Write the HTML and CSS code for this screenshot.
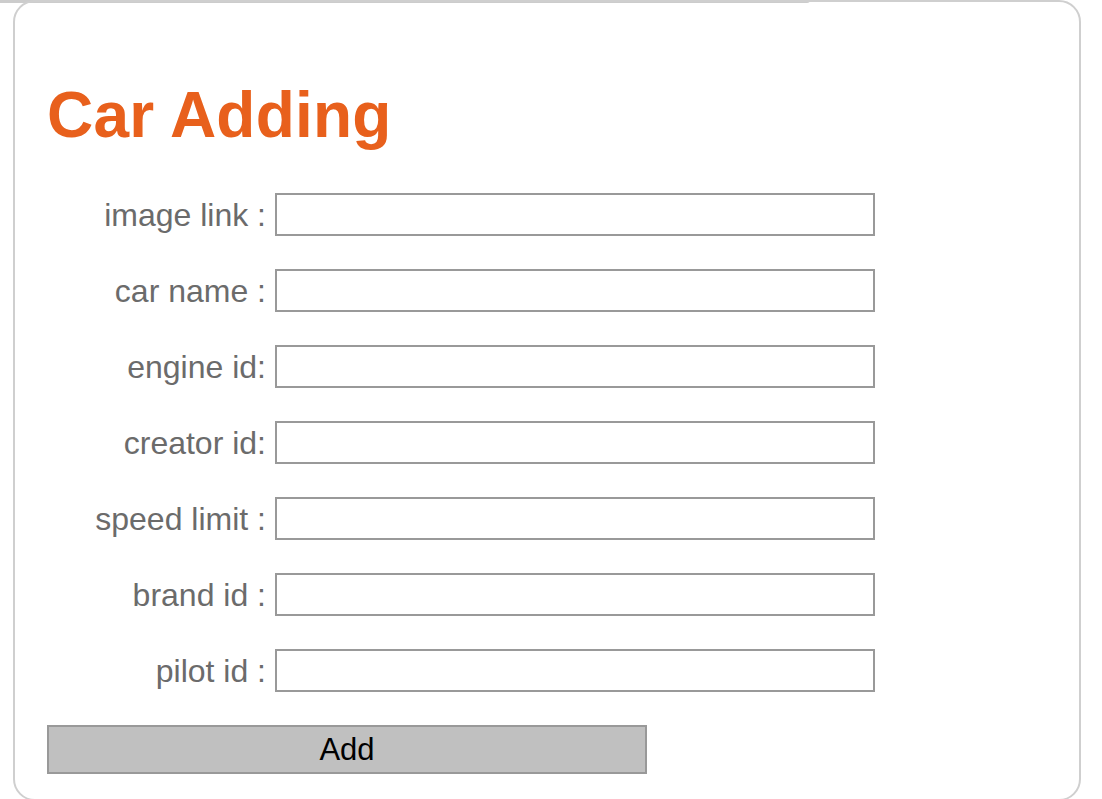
FILE: index.html
```html
<!DOCTYPE html>
<html>
<head>
<meta charset="utf-8">
<link rel="stylesheet" href="styles.css">
</head>
<body>
<div class="prev-card"></div>
<div class="card">
  <h1 class="title">Car Adding</h1>
  <form class="form">
    <label class="label">image link :</label><input class="field" type="text">
    <label class="label">car name :</label><input class="field" type="text">
    <label class="label">engine id:</label><input class="field" type="text">
    <label class="label">creator id:</label><input class="field" type="text">
    <label class="label">speed limit :</label><input class="field" type="text">
    <label class="label">brand id :</label><input class="field" type="text">
    <label class="label">pilot id :</label><input class="field" type="text">
  </form>
  <button class="add-btn" type="button">Add</button>
</div>
</body>
</html>
```

FILE: styles.css
```css
html, body {
  margin: 0;
  padding: 0;
  background: #fff;
  overflow: hidden;
}
body {
  font-family: "Liberation Sans", Arial, sans-serif;
}
.prev-card {
  width: 810px;
  height: 3px;
  background: #cccccc;
  border-radius: 0 0 3px 0;
}
.card {
  margin: -3px 0 0 13px;
  width: 1068px;
  height: 801px;
  border: 2px solid #cfcfcf;
  border-radius: 22px;
  padding: 76px 0 0 32px;
  box-sizing: border-box;
  background: transparent;
}
.title {
  margin: 0 0 41px 0;
  font-size: 64px;
  line-height: 74px;
  font-weight: bold;
  color: #e8601c;
  letter-spacing: 0.2px;
}
.form {
  display: grid;
  grid-template-columns: 219px 600px;
  column-gap: 9px;
  row-gap: 33px;
  align-items: center;
}
.label {
  text-align: right;
  font-size: 32px;
  color: #6b6b6b;
  line-height: 36px;
}
.field {
  width: 600px;
  height: 43px;
  box-sizing: border-box;
  border: 2px solid #999;
  margin: 0;
  padding: 0 6px;
  background: #fff;
  outline: none;
}
.add-btn {
  display: block;
  margin-top: 33px;
  width: 600px;
  height: 49px;
  box-sizing: border-box;
  background: #c0c0c0;
  border: 2px solid #999;
  font-family: "Liberation Sans", Arial, sans-serif;
  font-size: 31px;
  color: #000;
  padding: 0;
}
```
